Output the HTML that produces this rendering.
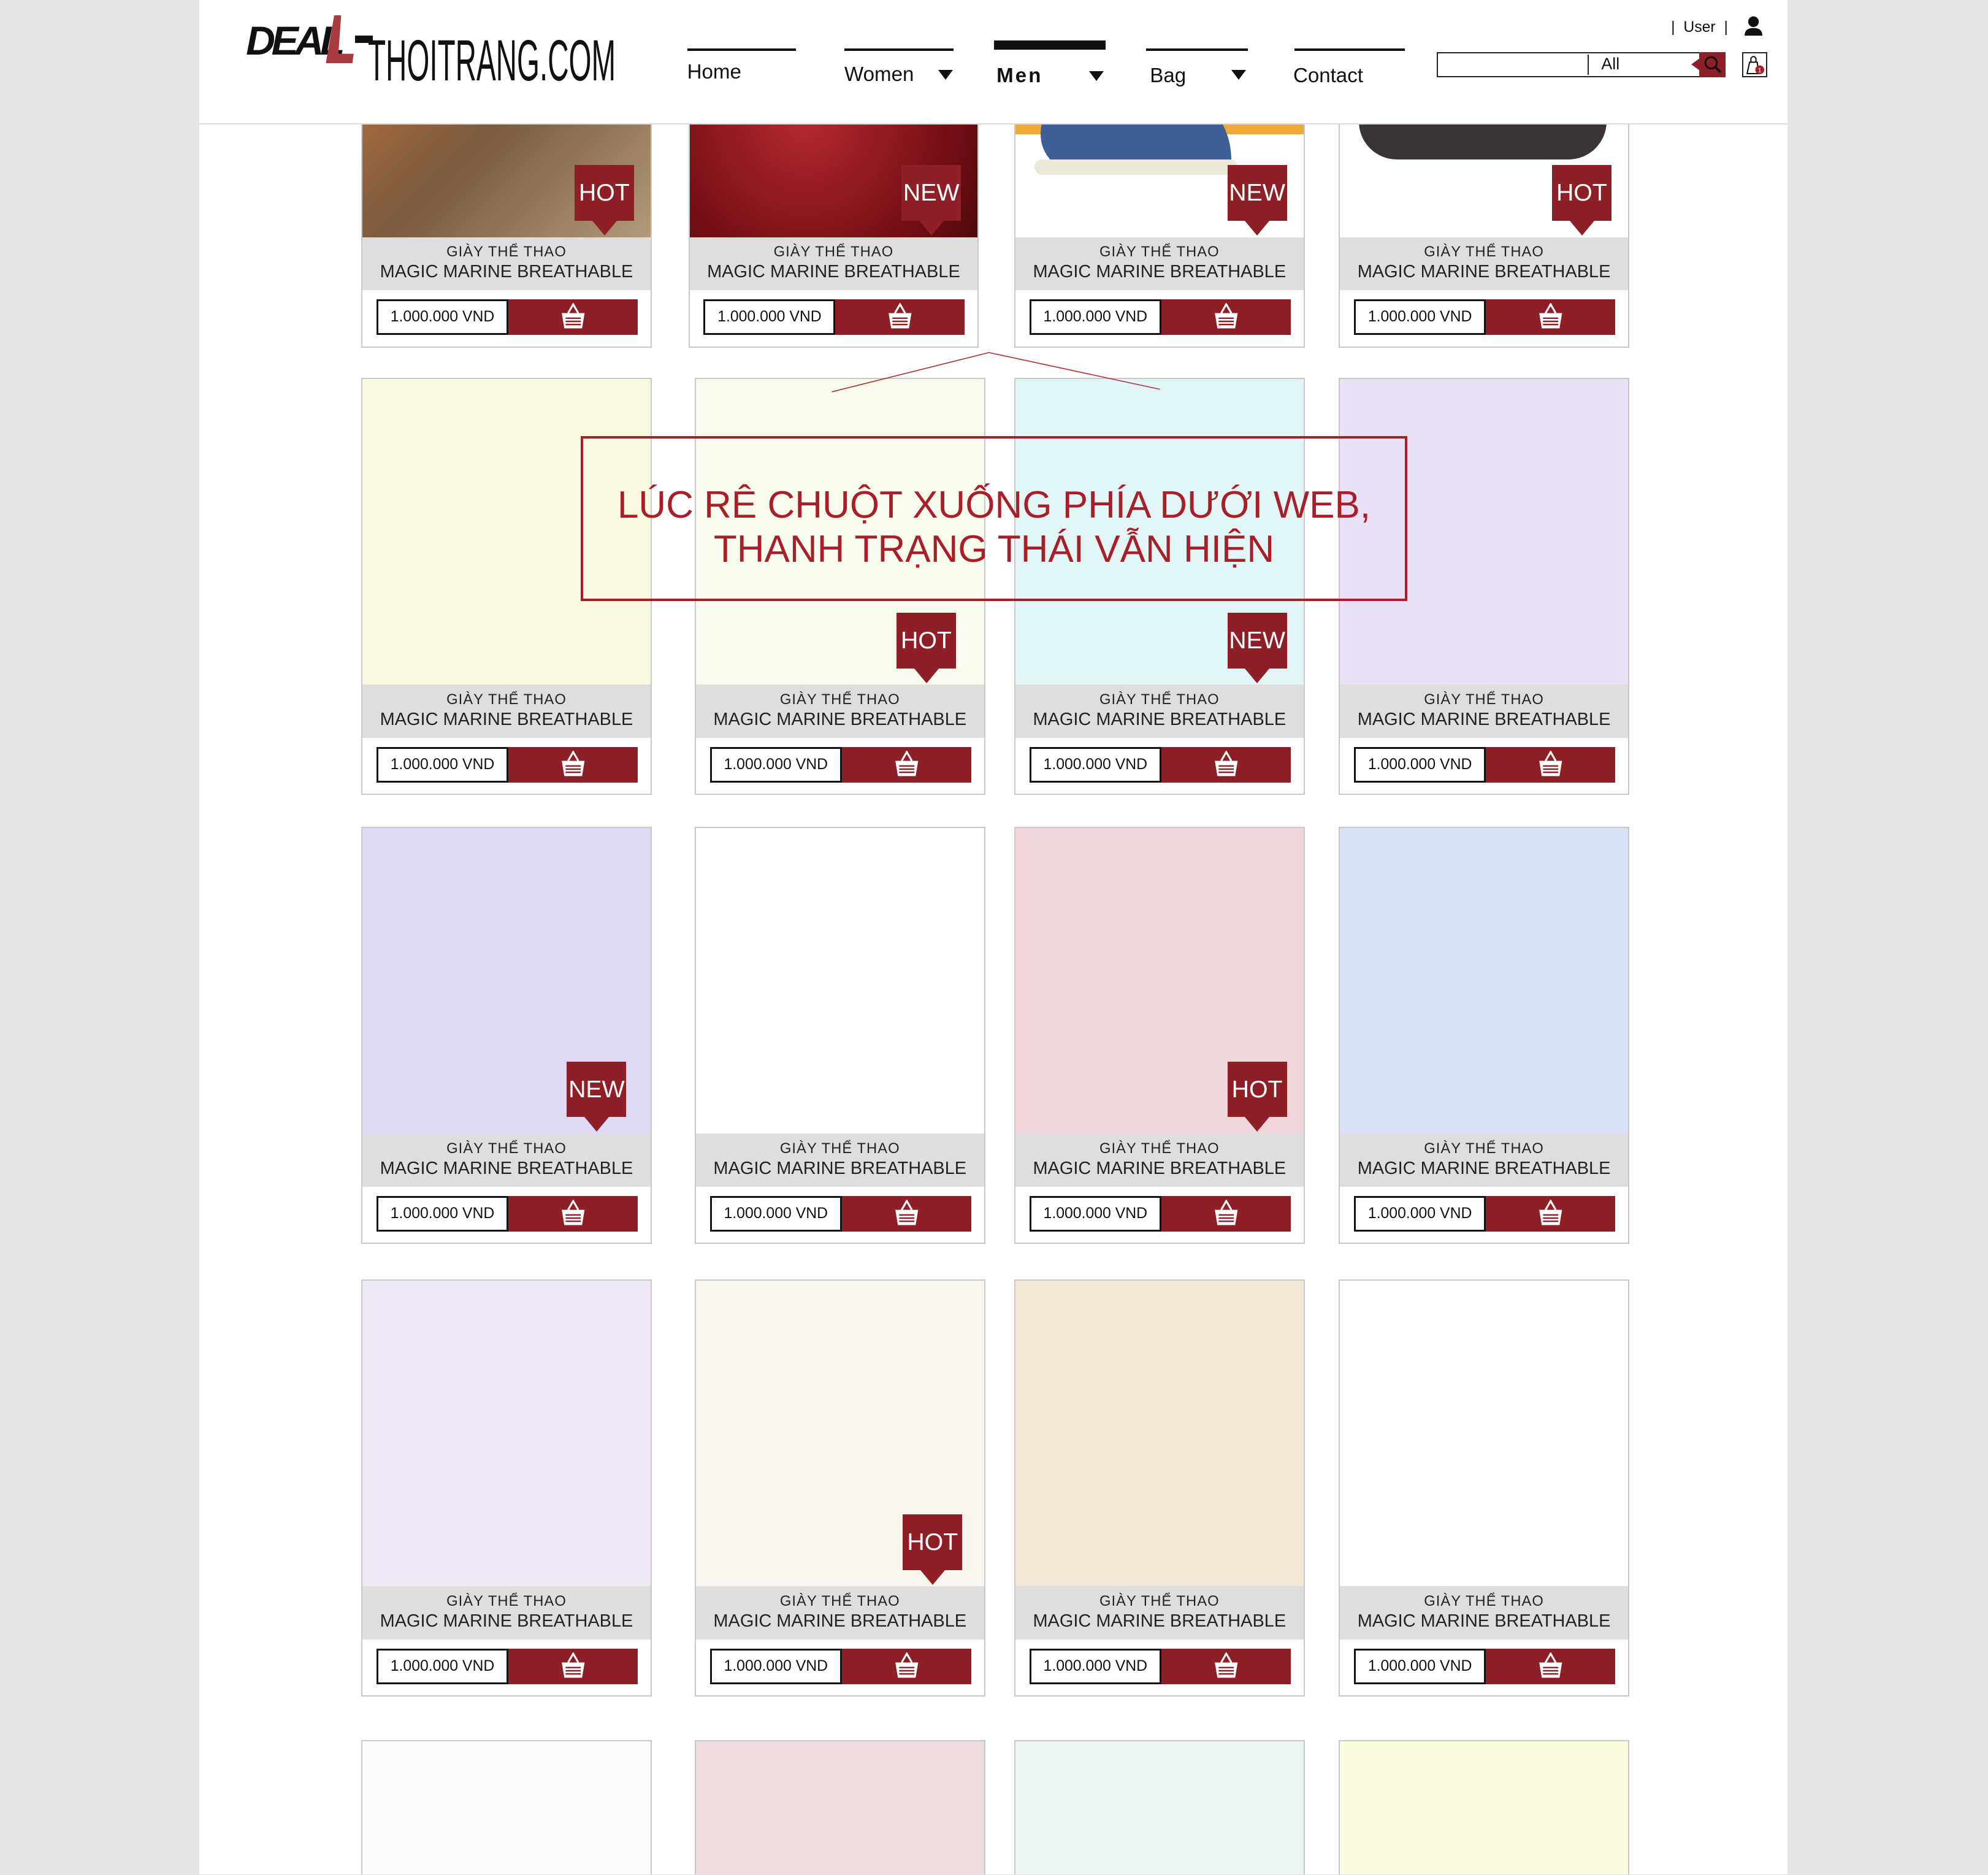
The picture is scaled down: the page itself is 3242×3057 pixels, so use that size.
<!DOCTYPE html>
<html><head><meta charset="utf-8">
<style>
html,body{margin:0;padding:0;background:#e5e5e5;width:3242px;height:3057px;overflow:hidden;}
#w{zoom:2.0676;position:relative;width:1568px;height:1478px;overflow:hidden;font-family:"Liberation Sans","Noto Sans CJK SC",sans-serif;}
.page{position:absolute;left:157px;top:0;width:1253px;height:1479px;background:#fff;}
.hdr{position:absolute;left:157px;top:0;width:1253px;height:97px;background:#fff;border-bottom:1px solid #ddd;z-index:5;}
.card{position:absolute;width:229px;height:329px;border:1px solid #c8c8c8;background:#fff;box-sizing:border-box;overflow:hidden;}
.img{position:absolute;left:0;top:0;width:100%;height:241px;}
.grey{position:absolute;left:0;top:241px;width:100%;height:42px;background:#e0dedd;text-align:center;color:#222;}
.grey .a{font-size:11.5px;letter-spacing:0.5px;margin-top:5px;}
.grey .b{font-size:14px;margin-top:1px;}
.pr{position:absolute;left:11px;top:290px;width:104px;height:28px;border:1.5px solid #111;box-sizing:border-box;background:#fff;font-size:12px;line-height:25px;text-align:center;color:#111;}
.bk{position:absolute;left:115px;top:290px;width:102px;height:28px;background:#8e1f27;}
.bk svg{position:absolute;left:40px;top:3px;}
.badge{position:absolute;right:13px;top:184px;width:47px;height:44px;background:#8e1f27;color:#fff;font-size:19px;text-align:center;line-height:44px;}
.badge:after{content:"";position:absolute;left:14px;top:44px;border-left:10px solid transparent;border-right:10px solid transparent;border-top:12px solid #8e1f27;}
.nav{position:absolute;top:0;font-size:16px;color:#111;}
.nav .ln{position:absolute;top:38px;height:2px;background:#111;}
</style></head><body><div id="w">
<div class="page"></div>

<!-- row 1 (cut off top) -->
<div class="card" style="left:285px;top:-55px;">
 <div class="img" style="background:linear-gradient(135deg,#6b4b33,#a46a3f 30%,#7b5a3d 55%,#b19a7a);"></div>
 <div class="badge">HOT</div>
 <div class="grey"><div class="a">GIÀY THỂ THAO</div><div class="b">MAGIC MARINE BREATHABLE</div></div>
 <div class="pr">1.000.000 VND</div><div class="bk"><svg width="22" height="22" viewBox="0 0 22 22"><path d="M7 8 L11 1 L15 8" fill="none" stroke="#fff" stroke-width="1.5"/><path d="M2 8 H20 L18 20 H4 Z" fill="#fff"/><path d="M5 12H17M5 14.5H17M5 17H17" stroke="#8e1f27" stroke-width="1.2"/></svg></div>
</div>
<div class="card" style="left:543px;top:-55px;">
 <div class="img" style="background:radial-gradient(ellipse at 40% 60%,#b52a30,#7a1016 55%,#3a0508);"></div>
 <div class="badge">NEW</div>
 <div class="grey"><div class="a">GIÀY THỂ THAO</div><div class="b">MAGIC MARINE BREATHABLE</div></div>
 <div class="pr">1.000.000 VND</div><div class="bk"><svg width="22" height="22" viewBox="0 0 22 22"><path d="M7 8 L11 1 L15 8" fill="none" stroke="#fff" stroke-width="1.5"/><path d="M2 8 H20 L18 20 H4 Z" fill="#fff"/><path d="M5 12H17M5 14.5H17M5 17H17" stroke="#8e1f27" stroke-width="1.2"/></svg></div>
</div>
<div class="card" style="left:800px;top:-55px;">
 <div class="img" style="background:#fff;"><div style="position:absolute;left:0;top:0;width:100%;height:160px;background:#efa83a;"></div><div style="position:absolute;left:20px;top:120px;width:150px;height:70px;border-radius:40px 60px 10px 30px;background:#3c5f95;"></div><div style="position:absolute;left:15px;top:180px;width:160px;height:12px;background:#eee8d8;border-radius:6px;"></div></div>
 <div class="badge">NEW</div>
 <div class="grey"><div class="a">GIÀY THỂ THAO</div><div class="b">MAGIC MARINE BREATHABLE</div></div>
 <div class="pr">1.000.000 VND</div><div class="bk"><svg width="22" height="22" viewBox="0 0 22 22"><path d="M7 8 L11 1 L15 8" fill="none" stroke="#fff" stroke-width="1.5"/><path d="M2 8 H20 L18 20 H4 Z" fill="#fff"/><path d="M5 12H17M5 14.5H17M5 17H17" stroke="#8e1f27" stroke-width="1.2"/></svg></div>
</div>
<div class="card" style="left:1056px;top:-55px;">
 <div class="img" style="background:#fff;"><div style="position:absolute;left:15px;top:110px;width:195px;height:70px;border-radius:20px 20px 30px 30px;background:#3a3434;"></div></div>
 <div class="badge">HOT</div>
 <div class="grey"><div class="a">GIÀY THỂ THAO</div><div class="b">MAGIC MARINE BREATHABLE</div></div>
 <div class="pr">1.000.000 VND</div><div class="bk"><svg width="22" height="22" viewBox="0 0 22 22"><path d="M7 8 L11 1 L15 8" fill="none" stroke="#fff" stroke-width="1.5"/><path d="M2 8 H20 L18 20 H4 Z" fill="#fff"/><path d="M5 12H17M5 14.5H17M5 17H17" stroke="#8e1f27" stroke-width="1.2"/></svg></div>
</div>

<!-- row 2 -->
<div class="card" style="left:285px;top:298px;"><div class="img" style="background:#faf9e1"></div><div class="grey"><div class="a">GIÀY THỂ THAO</div><div class="b">MAGIC MARINE BREATHABLE</div></div><div class="pr">1.000.000 VND</div><div class="bk"><svg width="22" height="22" viewBox="0 0 22 22"><path d="M7 8 L11 1 L15 8" fill="none" stroke="#fff" stroke-width="1.5"/><path d="M2 8 H20 L18 20 H4 Z" fill="#fff"/><path d="M5 12H17M5 14.5H17M5 17H17" stroke="#8e1f27" stroke-width="1.2"/></svg></div></div>
<div class="card" style="left:548px;top:298px;"><div class="img" style="background:#f8fcec"></div><div class="badge" style="right:22px">HOT</div><div class="grey"><div class="a">GIÀY THỂ THAO</div><div class="b">MAGIC MARINE BREATHABLE</div></div><div class="pr">1.000.000 VND</div><div class="bk"><svg width="22" height="22" viewBox="0 0 22 22"><path d="M7 8 L11 1 L15 8" fill="none" stroke="#fff" stroke-width="1.5"/><path d="M2 8 H20 L18 20 H4 Z" fill="#fff"/><path d="M5 12H17M5 14.5H17M5 17H17" stroke="#8e1f27" stroke-width="1.2"/></svg></div></div>
<div class="card" style="left:800px;top:298px;"><div class="img" style="background:#e2f6f7"></div><div class="badge">NEW</div><div class="grey"><div class="a">GIÀY THỂ THAO</div><div class="b">MAGIC MARINE BREATHABLE</div></div><div class="pr">1.000.000 VND</div><div class="bk"><svg width="22" height="22" viewBox="0 0 22 22"><path d="M7 8 L11 1 L15 8" fill="none" stroke="#fff" stroke-width="1.5"/><path d="M2 8 H20 L18 20 H4 Z" fill="#fff"/><path d="M5 12H17M5 14.5H17M5 17H17" stroke="#8e1f27" stroke-width="1.2"/></svg></div></div>
<div class="card" style="left:1056px;top:298px;"><div class="img" style="background:#ebe1f6"></div><div class="grey"><div class="a">GIÀY THỂ THAO</div><div class="b">MAGIC MARINE BREATHABLE</div></div><div class="pr">1.000.000 VND</div><div class="bk"><svg width="22" height="22" viewBox="0 0 22 22"><path d="M7 8 L11 1 L15 8" fill="none" stroke="#fff" stroke-width="1.5"/><path d="M2 8 H20 L18 20 H4 Z" fill="#fff"/><path d="M5 12H17M5 14.5H17M5 17H17" stroke="#8e1f27" stroke-width="1.2"/></svg></div></div>

<!-- row 3 -->
<div class="card" style="left:285px;top:652px;"><div class="img" style="background:#dcdaf5"></div><div class="badge" style="right:19px">NEW</div><div class="grey"><div class="a">GIÀY THỂ THAO</div><div class="b">MAGIC MARINE BREATHABLE</div></div><div class="pr">1.000.000 VND</div><div class="bk"><svg width="22" height="22" viewBox="0 0 22 22"><path d="M7 8 L11 1 L15 8" fill="none" stroke="#fff" stroke-width="1.5"/><path d="M2 8 H20 L18 20 H4 Z" fill="#fff"/><path d="M5 12H17M5 14.5H17M5 17H17" stroke="#8e1f27" stroke-width="1.2"/></svg></div></div>
<div class="card" style="left:548px;top:652px;"><div class="img" style="background:#fff"></div><div class="grey"><div class="a">GIÀY THỂ THAO</div><div class="b">MAGIC MARINE BREATHABLE</div></div><div class="pr">1.000.000 VND</div><div class="bk"><svg width="22" height="22" viewBox="0 0 22 22"><path d="M7 8 L11 1 L15 8" fill="none" stroke="#fff" stroke-width="1.5"/><path d="M2 8 H20 L18 20 H4 Z" fill="#fff"/><path d="M5 12H17M5 14.5H17M5 17H17" stroke="#8e1f27" stroke-width="1.2"/></svg></div></div>
<div class="card" style="left:800px;top:652px;"><div class="img" style="background:#f0d6d8"></div><div class="badge">HOT</div><div class="grey"><div class="a">GIÀY THỂ THAO</div><div class="b">MAGIC MARINE BREATHABLE</div></div><div class="pr">1.000.000 VND</div><div class="bk"><svg width="22" height="22" viewBox="0 0 22 22"><path d="M7 8 L11 1 L15 8" fill="none" stroke="#fff" stroke-width="1.5"/><path d="M2 8 H20 L18 20 H4 Z" fill="#fff"/><path d="M5 12H17M5 14.5H17M5 17H17" stroke="#8e1f27" stroke-width="1.2"/></svg></div></div>
<div class="card" style="left:1056px;top:652px;"><div class="img" style="background:#d8e0f6"></div><div class="grey"><div class="a">GIÀY THỂ THAO</div><div class="b">MAGIC MARINE BREATHABLE</div></div><div class="pr">1.000.000 VND</div><div class="bk"><svg width="22" height="22" viewBox="0 0 22 22"><path d="M7 8 L11 1 L15 8" fill="none" stroke="#fff" stroke-width="1.5"/><path d="M2 8 H20 L18 20 H4 Z" fill="#fff"/><path d="M5 12H17M5 14.5H17M5 17H17" stroke="#8e1f27" stroke-width="1.2"/></svg></div></div>

<!-- row 4 -->
<div class="card" style="left:285px;top:1009px;"><div class="img" style="background:#f0e8f7"></div><div class="grey"><div class="a">GIÀY THỂ THAO</div><div class="b">MAGIC MARINE BREATHABLE</div></div><div class="pr">1.000.000 VND</div><div class="bk"><svg width="22" height="22" viewBox="0 0 22 22"><path d="M7 8 L11 1 L15 8" fill="none" stroke="#fff" stroke-width="1.5"/><path d="M2 8 H20 L18 20 H4 Z" fill="#fff"/><path d="M5 12H17M5 14.5H17M5 17H17" stroke="#8e1f27" stroke-width="1.2"/></svg></div></div>
<div class="card" style="left:548px;top:1009px;"><div class="img" style="background:#f8f5ee"></div><div class="badge" style="right:17px">HOT</div><div class="grey"><div class="a">GIÀY THỂ THAO</div><div class="b">MAGIC MARINE BREATHABLE</div></div><div class="pr">1.000.000 VND</div><div class="bk"><svg width="22" height="22" viewBox="0 0 22 22"><path d="M7 8 L11 1 L15 8" fill="none" stroke="#fff" stroke-width="1.5"/><path d="M2 8 H20 L18 20 H4 Z" fill="#fff"/><path d="M5 12H17M5 14.5H17M5 17H17" stroke="#8e1f27" stroke-width="1.2"/></svg></div></div>
<div class="card" style="left:800px;top:1009px;"><div class="img" style="background:#f3e8d6"></div><div class="grey"><div class="a">GIÀY THỂ THAO</div><div class="b">MAGIC MARINE BREATHABLE</div></div><div class="pr">1.000.000 VND</div><div class="bk"><svg width="22" height="22" viewBox="0 0 22 22"><path d="M7 8 L11 1 L15 8" fill="none" stroke="#fff" stroke-width="1.5"/><path d="M2 8 H20 L18 20 H4 Z" fill="#fff"/><path d="M5 12H17M5 14.5H17M5 17H17" stroke="#8e1f27" stroke-width="1.2"/></svg></div></div>
<div class="card" style="left:1056px;top:1009px;"><div class="img" style="background:#fff"></div><div class="grey"><div class="a">GIÀY THỂ THAO</div><div class="b">MAGIC MARINE BREATHABLE</div></div><div class="pr">1.000.000 VND</div><div class="bk"><svg width="22" height="22" viewBox="0 0 22 22"><path d="M7 8 L11 1 L15 8" fill="none" stroke="#fff" stroke-width="1.5"/><path d="M2 8 H20 L18 20 H4 Z" fill="#fff"/><path d="M5 12H17M5 14.5H17M5 17H17" stroke="#8e1f27" stroke-width="1.2"/></svg></div></div>

<!-- row 5 -->
<div class="card" style="left:285px;top:1372px;height:120px;"><div class="img" style="background:#fafcfb"></div></div>
<div class="card" style="left:548px;top:1372px;height:120px;"><div class="img" style="background:#ecdcdd"></div></div>
<div class="card" style="left:800px;top:1372px;height:120px;"><div class="img" style="background:#eaf5ef"></div></div>
<div class="card" style="left:1056px;top:1372px;height:120px;"><div class="img" style="background:#fafadf"></div></div>

<!-- annotation -->
<svg style="position:absolute;left:0;top:0;" width="1568" height="400"><path d="M656 309 L780 278 L915 307" fill="none" stroke="#b3343c" stroke-width="0.8"/></svg>
<div style="position:absolute;left:458px;top:344px;width:652px;height:130px;border:2px solid #a81f2a;box-sizing:border-box;color:#a81f2a;font-size:30px;text-align:center;line-height:35px;padding-top:35px;white-space:nowrap;">LÚC RÊ CHUỘT XUỐNG PHÍA DƯỚI WEB,<br>THANH TRẠNG THÁI VẪN HIỆN</div>

<!-- header -->
<div class="hdr"></div>
<div style="position:absolute;left:0;top:0;width:1568px;height:97px;z-index:6;">
 <div style="position:absolute;left:194px;top:14px;font-size:32px;font-weight:bold;font-style:italic;letter-spacing:-3px;color:#111;">DEAL</div>
 <div style="position:absolute;left:257px;top:12px;width:22px;height:38px;background:#a83a40;clip-path:polygon(30% 0,55% 0,45% 80%,100% 80%,95% 100%,0 100%);"></div>
 <div style="position:absolute;left:280px;top:28px;width:14px;height:6px;background:#111;"></div>
 <div style="position:absolute;left:290px;top:22px;font-size:46px;color:#111;transform:scaleX(0.5);transform-origin:left;white-space:nowrap;">THOITRANG.COM</div>
 <div class="nav" style="left:542px;"><div class="ln" style="left:0;width:86px"></div><div style="position:absolute;top:48px;">Home</div></div>
 <div class="nav" style="left:666px;"><div class="ln" style="left:0;width:86px"></div><div style="position:absolute;top:50px;white-space:nowrap;">Women</div><div style="position:absolute;left:74px;top:55px;border-left:6px solid transparent;border-right:6px solid transparent;border-top:8px solid #111;"></div></div>
 <div class="nav" style="left:784px;"><div style="position:absolute;top:32px;width:88px;height:7px;background:#111;"></div><div style="position:absolute;left:2px;top:51px;letter-spacing:1.5px;font-weight:bold;">Men</div><div style="position:absolute;left:75px;top:56px;border-left:6px solid transparent;border-right:6px solid transparent;border-top:8px solid #111;"></div></div>
 <div class="nav" style="left:904px;"><div class="ln" style="left:0;width:80px"></div><div style="position:absolute;left:3px;top:51px;">Bag</div><div style="position:absolute;left:67px;top:55px;border-left:6px solid transparent;border-right:6px solid transparent;border-top:8px solid #111;"></div></div>
 <div class="nav" style="left:1020px;"><div class="ln" style="left:1px;width:87px"></div><div style="position:absolute;top:51px;">Contact</div></div>
 <div style="position:absolute;left:1318px;top:15px;font-size:12px;color:#111;white-space:nowrap;">|&nbsp; User &nbsp;|</div>
 <svg style="position:absolute;left:1375px;top:12px;" width="16" height="17" viewBox="0 0 16 17"><circle cx="8" cy="5" r="4.2" fill="#111"/><path d="M1 16 Q1 10 8 10 Q15 10 15 16 Z" fill="#111"/></svg>
 <div style="position:absolute;left:1133px;top:41px;width:228px;height:20px;border:1px solid #222;box-sizing:border-box;background:#fff;"></div>
 <div style="position:absolute;left:1252px;top:43px;width:1px;height:16px;background:#222;"></div>
 <div style="position:absolute;left:1263px;top:43px;font-size:13px;color:#111;">All</div>
 <div style="position:absolute;left:1340px;top:41px;width:21px;height:20px;background:#8e1f27;"></div>
 <div style="position:absolute;left:1334px;top:46px;border-top:5px solid transparent;border-bottom:5px solid transparent;border-right:7px solid #8e1f27;"></div>
 <svg style="position:absolute;left:1343px;top:43px;" width="16" height="16" viewBox="0 0 16 16"><circle cx="6.5" cy="6.5" r="4.5" fill="none" stroke="#111" stroke-width="1.4"/><path d="M10 10 L14 14" stroke="#111" stroke-width="2"/></svg>
 <div style="position:absolute;left:1374px;top:41px;width:20px;height:20px;border:1px solid #222;box-sizing:border-box;background:#fff;"></div>
 <svg style="position:absolute;left:1376px;top:43px;" width="17" height="17" viewBox="0 0 17 17"><path d="M4 6 L2 15 H11 L10 6 Z" fill="none" stroke="#111" stroke-width="1"/><path d="M5 6 V3 Q7 0 9 3 V6" fill="none" stroke="#111" stroke-width="1"/><circle cx="12" cy="12" r="3.5" fill="#a81f2a"/><text x="12" y="14" font-size="5" fill="#fff" text-anchor="middle" font-family="Liberation Sans">1</text></svg>
</div>
</div></body></html>
